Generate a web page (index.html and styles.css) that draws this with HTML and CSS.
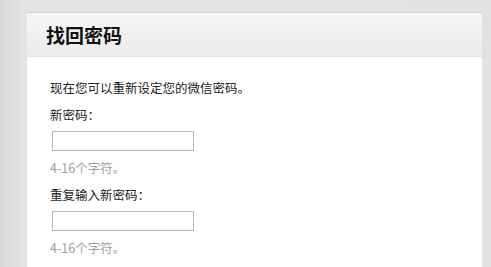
FILE: index.html
```html
<!DOCTYPE html>
<html>
  <head>
    <meta charset="utf-8">
    <title>找回密码</title>
    <link rel="stylesheet" href="styles.css">
  </head>
  <body>
    <div class="panel">
      <div class="panel-head">
        <h2 class="panel-title">找回密码</h2>
      </div>
      <div class="panel-body">
        <p class="intro">现在您可以重新设定您的微信密码。</p>
        <div class="field">
          <label class="field-label">新密码：</label>
          <input class="field-input" type="password">
          <div class="field-tip">4-16个字符。</div>
        </div>
        <div class="field">
          <label class="field-label">重复输入新密码：</label>
          <input class="field-input" type="password">
          <div class="field-tip">4-16个字符。</div>
        </div>
      </div>
    </div>
  </body>
</html>
```

FILE: styles.css
```css
body {
  margin: 0;
  padding: 13px 9px 0 27px;
  background: linear-gradient(to right, #d9d9d9, #e4e4e4 27px, #e2e2e2);
  font-family: "Noto Sans CJK SC", "DejaVu Sans", sans-serif;
  font-size: 12.5px;
  color: #222;
  height: 254px;
  overflow: hidden;
}

.panel {
  width: 455px;
  height: 100%;
  background-color: #ffffff;
  box-shadow: 0 -1px 0 #d0d0d0;
}

.panel-head {
  height: 44px;
  padding-left: 19px;
  background: linear-gradient(to bottom, #f6f6f6, #ebebeb);
  border-bottom: 1px solid #e4e4e4;
  box-sizing: border-box;
}

.panel-title {
  margin: 0;
  font-size: 19px;
  font-weight: bold;
  line-height: 44px;
  color: #111;
}

.panel-body {
  padding: 19px 0 0 23px;
}

.intro {
  margin: 0;
  line-height: 24px;
}

.field {
  display: flex;
  flex-direction: column;
  align-items: flex-start;
}

.field-label {
  margin-top: 3px;
  line-height: 24px;
}

.field-input {
  width: 142px;
  height: 20px;
  margin: 4px 0 0 2px;
  padding: 0 3px;
  border: 1px solid #b8b8b8;
  box-sizing: border-box;
  background: #fff;
}

.field-tip {
  margin-top: 5px;
  line-height: 24px;
  color: #a0a0a0;
}
```
